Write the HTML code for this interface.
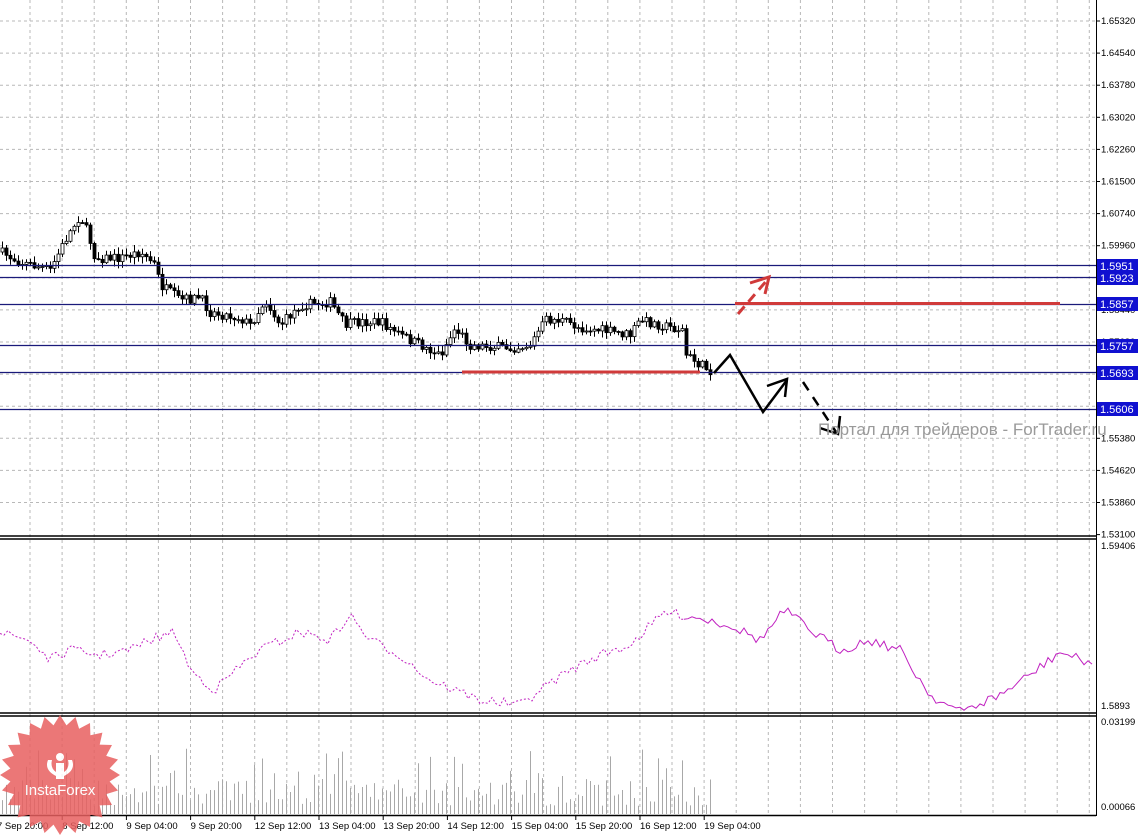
<!DOCTYPE html>
<html><head><meta charset="utf-8"><style>
html,body{margin:0;padding:0;background:#fff;width:1139px;height:838px;overflow:hidden}
svg{display:block;font-family:"Liberation Sans",sans-serif}
</style></head><body>
<svg id="s" width="1139" height="838" xmlns="http://www.w3.org/2000/svg">
<rect width="1139" height="838" fill="#fff"/>
<g id="grid" stroke="#b8b8b8" stroke-dasharray="3,3" stroke-width="1"></g>
<g id="vol" stroke="#a8a8a8" stroke-width="1"></g>
<g id="cand"></g>
<g stroke="#1a1a7a" stroke-width="1.2">
<line x1="0" y1="265.5" x2="1096" y2="265.5"/>
<line x1="0" y1="277.5" x2="1096" y2="277.5"/>
<line x1="0" y1="304.5" x2="1096" y2="304.5"/>
<line x1="0" y1="345.5" x2="1096" y2="345.5"/>
<line x1="0" y1="372.5" x2="1096" y2="372.5"/>
<line x1="0" y1="409.5" x2="1096" y2="409.5"/>
</g>
<g stroke="#d03a3a" stroke-width="3">
<line x1="735" y1="303.5" x2="1060" y2="303.5"/>
<line x1="462" y1="372" x2="700" y2="372"/>
</g>
<line x1="738" y1="314" x2="768" y2="279" stroke="#d03a3a" stroke-width="3" stroke-dasharray="10,6"/>
<polyline points="750,283 769,277 765,294" stroke="#d03a3a" stroke-width="3" fill="none"/>
<polyline points="714,373 730,355 763,412 787,380" stroke="#000" stroke-width="2.5" fill="none"/>
<polyline points="767,386 787,379 785,397" stroke="#000" stroke-width="2.5" fill="none"/>
<line x1="803" y1="382" x2="836" y2="432" stroke="#000" stroke-width="2.5" stroke-dasharray="10,8"/>
<polyline points="820,428 838,434 840,416" stroke="#000" stroke-width="2.5" fill="none"/>
<text x="818" y="435" font-size="17" fill="#9a9a9a">Портал для трейдеров - ForTrader.ru</text>
<path id="ind" fill="none" stroke="#c020c0" stroke-width="1"/>
<g stroke="#000" stroke-width="1.5">
<line x1="0" y1="536" x2="1096" y2="536"/><line x1="0" y1="539" x2="1096" y2="539"/>
<line x1="0" y1="713" x2="1096" y2="713"/><line x1="0" y1="716" x2="1096" y2="716"/>
<line x1="0" y1="815.5" x2="1096" y2="815.5"/>
</g>
<line x1="1096.5" y1="0" x2="1096.5" y2="816" stroke="#000"/>
<g id="ax" font-size="9.5" fill="#000"></g>
<g font-size="11" fill="#fff">
<rect x="1097" y="259" width="41" height="14" fill="#1010d0"/><text x="1100" y="270">1.5951</text>
<rect x="1097" y="271" width="41" height="14" fill="#1010d0"/><text x="1100" y="282">1.5923</text>
<rect x="1097" y="297" width="41" height="14" fill="#1010d0"/><text x="1100" y="308">1.5857</text>
<rect x="1097" y="339" width="41" height="14" fill="#1010d0"/><text x="1100" y="350">1.5757</text>
<rect x="1097" y="366" width="41" height="14" fill="#1010d0"/><text x="1100" y="377">1.5693</text>
<rect x="1097" y="402" width="41" height="14" fill="#1010d0"/><text x="1100" y="413">1.5606</text>
</g>
<g id="tm" font-size="9.5" fill="#000"></g>
<g opacity="0.85">
<path id="star" fill="#e86060"/>
<g fill="#fff">
<circle cx="60" cy="757" r="4"/><rect x="56" y="763" width="8" height="16"/>
<path d="M48 760 q-4 10 8 16 v-4 q-6 -4 -4 -12z"/><path d="M72 760 q4 10 -8 16 v-4 q6 -4 4 -12z"/>
</g>
<text x="60" y="795" font-size="15" fill="#fff" text-anchor="middle">InstaForex</text>
</g>
</svg>
<script>
var NS="http://www.w3.org/2000/svg";
function el(p,t,a,txt){var e=document.createElementNS(NS,t);for(var k in a)e.setAttribute(k,a[k]);if(txt)e.textContent=txt;document.getElementById(p).appendChild(e);return e;}
var seed=7;function r(){seed=(seed*16807)%2147483647;return seed/2147483647;}
for(var x=30;x<1096;x+=32.1){el("grid","line",{x1:x,y1:0,x2:x,y2:815});}
var labs=["1.65320","1.64540","1.63780","1.63020","1.62260","1.61500","1.60740","1.59960","1.59200","1.58440","1.57680","1.56920","1.56140","1.55380","1.54620","1.53860","1.53100"];
for(var i=0;i<labs.length;i++){var y=21+i*32.1;if(i<16)el("grid","line",{x1:0,y1:y,x2:1096,y2:y});
el("ax","line",{x1:1096,y1:y,x2:1100,y2:y,stroke:"#000"});el("ax","text",{x:1101,y:y+3},labs[i]);}
el("ax","text",{x:1101,y:549},"1.59406");el("ax","text",{x:1101,y:709},"1.5893");
el("ax","text",{x:1101,y:725},"0.03199");el("ax","text",{x:1101,y:810},"0.00066");
var tl=["7 Sep 20:00","8 Sep 12:00","9 Sep 04:00","9 Sep 20:00","12 Sep 12:00","13 Sep 04:00","13 Sep 20:00","14 Sep 12:00","15 Sep 04:00","15 Sep 20:00","16 Sep 12:00","19 Sep 04:00"];
for(var i=0;i<tl.length;i++){var x=-4+i*64.2;el("tm","line",{x1:x+2,y1:815,x2:x+2,y2:820,stroke:"#000"});el("tm","text",{x:(i==0?-3:x+2),y:829},tl[i]);}
var kp=[[0,252],[20,262],[50,270],[65,240],[80,215],[88,235],[95,258],[120,258],[140,252],[155,265],[160,285],[180,300],[200,298],[210,312],[240,318],[250,325],[265,300],[280,325],[300,305],[330,302],[345,325],[360,322],[380,322],[400,335],[430,350],[440,355],[455,328],[470,345],[510,348],[530,345],[545,320],[560,320],[580,328],[600,330],[630,335],[640,320],[660,325],[682,330],[686,355],[700,365],[714,372]];
function interp(k,x){for(var i=1;i<k.length;i++)if(x<=k[i][0]){var a=k[i-1],b=k[i];return a[1]+(b[1]-a[1])*(x-a[0])/(b[0]-a[0]);}return k[k.length-1][1];}
var prev=252;
for(var x=2;x<=712;x+=4){var c=interp(kp,x)+(r()-0.5)*10;var o=prev;var hi=Math.min(o,c)-r()*6-1,lo=Math.max(o,c)+r()*6+1;
el("cand","line",{x1:x+.5,y1:hi,x2:x+.5,y2:lo,stroke:"#000"});
var t=Math.min(o,c),h=Math.max(Math.abs(c-o),1);
el("cand","rect",{x:x-1,y:t,width:3,height:h,fill:c>o?"#000":"#fff",stroke:"#000","stroke-width":0.8});prev=c;
var vh=8+r()*28+(r()<0.18?30:0);el("vol","line",{x1:x+.5,y1:814-vh,x2:x+.5,y2:814});}
var ik=[[0,633],[30,640],[50,660],[70,650],[100,655],[130,650],[150,640],[175,632],[190,670],[215,690],[230,675],[260,650],[300,632],[330,640],[350,615],[370,640],[400,655],[430,680],[480,700],[520,705],[540,690],[570,670],[600,655],[630,645],[665,612],[700,618],[730,625],[760,640],[785,610],[810,630],[840,650],[870,640],[900,650],[930,695],[960,712],[1000,695],[1030,675],[1060,652],[1080,660],[1093,662]];
var d1="",d2="";for(var x=0;x<=1093;x+=4){var y=interp(ik,x)+(r()-0.5)*10;if(x<=684)d1+=(d1?"L":"M")+x+" "+y.toFixed(1);if(x>=684)d2+=(d2?"L":"M")+x+" "+y.toFixed(1);}
document.getElementById("ind").setAttribute("d",d2);
el("s","path",{d:d1,fill:"none",stroke:"#c020c0","stroke-dasharray":"2,2"});
var sd="";for(var i=0;i<48;i++){var a=i*Math.PI/24,R=i%2?50:60;sd+=(i?"L":"M")+(60+R*Math.cos(a)).toFixed(1)+" "+(775+R*Math.sin(a)).toFixed(1);}
document.getElementById("star").setAttribute("d",sd+"Z");
</script>
</body></html>
